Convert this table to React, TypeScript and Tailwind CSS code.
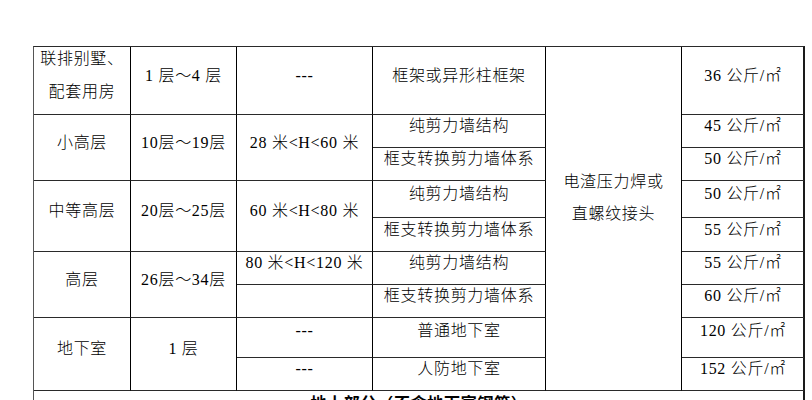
import React from "react";

const FONT = { fontFamily: '"Liberation Serif", "Noto Sans CJK SC", serif' };

function Cell({ className = "", children }: { className?: string; children?: React.ReactNode }) {
  return (
    <div
      className={`flex items-center justify-center text-center border-b border-b-[#2a2a2a] ${className}`}
    >
      {children}
    </div>
  );
}

export default function App() {
  return (
    <div className="w-[812px] h-[400px] overflow-hidden bg-white text-black" style={FONT}>
      <div
        className="ml-[33px] mt-[46px] w-[772px] grid grid-cols-[97px_106px_136px_173px_136px_122px] grid-rows-[68px_33px_33px_37px_34px_33px_33px_40px_33px_40px] border-t border-t-[#2a2a2a] border-l border-l-[#555] border-r-2 border-r-[#1a1a1a] text-[16px] leading-[20px] tracking-[0.7px] font-light"
      >
        {/* Row 1 */}
        <Cell className="col-start-1 row-start-1 border-r border-r-black pb-[12px] leading-[33px]">
          <div>
            联排别墅、
            <br />
            配套用房
          </div>
        </Cell>
        <Cell className="col-start-2 row-start-1 border-r border-r-black pb-[10px]">1 层～4 层</Cell>
        <Cell className="col-start-3 row-start-1 border-r border-r-black pb-[10px]">---</Cell>
        <Cell className="col-start-4 row-start-1 border-r border-r-black pb-[10px]">框架或异形柱框架</Cell>
        <Cell className="col-start-5 row-start-1 row-span-9 border-r border-r-black pb-[41px] leading-[32px]">
          <div>
            电渣压力焊或
            <br />
            直螺纹接头
          </div>
        </Cell>
        <Cell className="col-start-6 row-start-1 pb-[10px]">36 公斤/㎡</Cell>

        {/* 小高层 */}
        <Cell className="col-start-1 row-start-2 row-span-2 border-r border-r-black pb-[10px]">小高层</Cell>
        <Cell className="col-start-2 row-start-2 row-span-2 border-r border-r-black pb-[10px]">10层～19层</Cell>
        <Cell className="col-start-3 row-start-2 row-span-2 border-r border-r-black pb-[10px]">28 米&lt;H&lt;60 米</Cell>
        <Cell className="col-start-4 row-start-2 border-r border-r-black pb-[10px]">纯剪力墙结构</Cell>
        <Cell className="col-start-6 row-start-2 pb-[10px]">45 公斤/㎡</Cell>
        <Cell className="col-start-4 row-start-3 border-r border-r-black pb-[10px]">框支转换剪力墙体系</Cell>
        <Cell className="col-start-6 row-start-3 pb-[10px]">50 公斤/㎡</Cell>

        {/* 中等高层 */}
        <Cell className="col-start-1 row-start-4 row-span-2 border-r border-r-black pb-[10px]">中等高层</Cell>
        <Cell className="col-start-2 row-start-4 row-span-2 border-r border-r-black pb-[10px]">20层～25层</Cell>
        <Cell className="col-start-3 row-start-4 row-span-2 border-r border-r-black pb-[10px]">60 米&lt;H&lt;80 米</Cell>
        <Cell className="col-start-4 row-start-4 border-r border-r-black pb-[10px]">纯剪力墙结构</Cell>
        <Cell className="col-start-6 row-start-4 pb-[10px]">50 公斤/㎡</Cell>
        <Cell className="col-start-4 row-start-5 border-r border-r-black pb-[10px]">框支转换剪力墙体系</Cell>
        <Cell className="col-start-6 row-start-5 pb-[10px]">55 公斤/㎡</Cell>

        {/* 高层 */}
        <Cell className="col-start-1 row-start-6 row-span-2 border-r border-r-black pb-[10px]">高层</Cell>
        <Cell className="col-start-2 row-start-6 row-span-2 border-r border-r-black pb-[10px]">26层～34层</Cell>
        <Cell className="col-start-3 row-start-6 border-r border-r-black pb-[10px]">80 米&lt;H&lt;120 米</Cell>
        <Cell className="col-start-4 row-start-6 border-r border-r-black pb-[10px]">纯剪力墙结构</Cell>
        <Cell className="col-start-6 row-start-6 pb-[10px]">55 公斤/㎡</Cell>
        <Cell className="col-start-3 row-start-7 border-r border-r-black pb-[10px]" />
        <Cell className="col-start-4 row-start-7 border-r border-r-black pb-[10px]">框支转换剪力墙体系</Cell>
        <Cell className="col-start-6 row-start-7 pb-[10px]">60 公斤/㎡</Cell>

        {/* 地下室 */}
        <Cell className="col-start-1 row-start-8 row-span-2 border-r border-r-black pb-[10px]">地下室</Cell>
        <Cell className="col-start-2 row-start-8 row-span-2 border-r border-r-black pb-[10px]">1 层</Cell>
        <Cell className="col-start-3 row-start-8 border-r border-r-black pb-[14px]">---</Cell>
        <Cell className="col-start-4 row-start-8 border-r border-r-black pb-[14px]">普通地下室</Cell>
        <Cell className="col-start-6 row-start-8 pb-[14px]">120 公斤/㎡</Cell>
        <Cell className="col-start-3 row-start-9 border-r border-r-black pb-[10px]">---</Cell>
        <Cell className="col-start-4 row-start-9 border-r border-r-black pb-[10px]">人防地下室</Cell>
        <Cell className="col-start-6 row-start-9 pb-[10px]">152 公斤/㎡</Cell>

        {/* 地上部分 */}
        <div className="col-start-1 col-span-6 row-start-10 flex items-start justify-center pt-[3px] font-bold">
          地上部分（不含地下室钢筋）
        </div>
      </div>
    </div>
  );
}
